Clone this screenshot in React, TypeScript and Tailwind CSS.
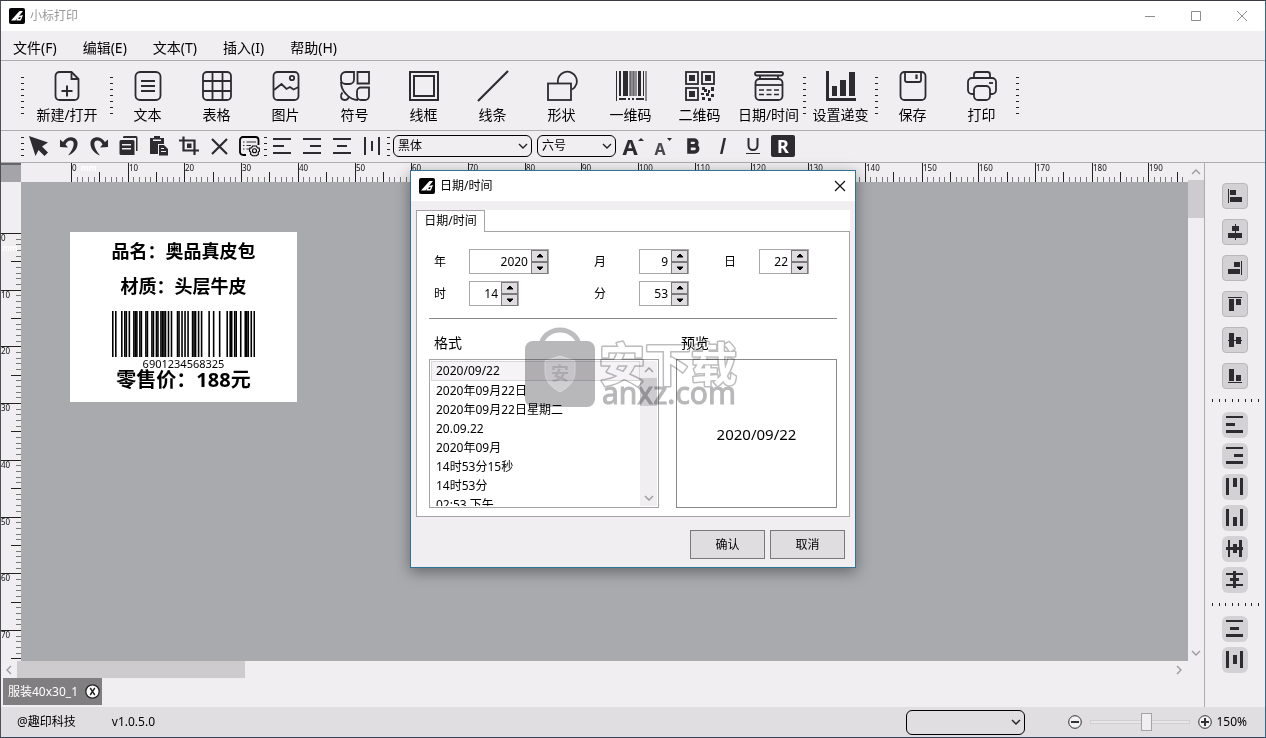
import type { ReactNode } from "react";

const INK = "#2d2b30";

const MENUS = ["文件(F)", "编辑(E)", "文本(T)", "插入(I)", "帮助(H)"];

const FORMATS = [
  "2020/09/22",
  "2020年09月22日",
  "2020年09月22日星期二",
  "20.09.22",
  "2020年09月",
  "14时53分15秒",
  "14时53分",
  "02:53 下午",
];

/* ── Icons ── */

function Big({ children }: { children: ReactNode }) {
  return (
    <svg width="32" height="32" viewBox="0 0 32 32" fill="none" stroke={INK} strokeWidth="1.8" aria-hidden>
      {children}
    </svg>
  );
}

const TOOL_ICONS: Record<string, ReactNode> = {
  new: (
    <Big>
      <path d="M20.5 2H8.5a4 4 0 0 0-4 4v20a4 4 0 0 0 4 4h15a4 4 0 0 0 4-4V9z" strokeLinejoin="round" />
      <path d="M20.5 2v7h7" />
      <path d="M16 15.500v11M10.500 21h11" strokeWidth="2" />
    </Big>
  ),
  text: (
    <Big>
      <rect x="3.5" y="2" width="25" height="28" rx="4.5" />
      <path d="M9 11h14M9 16h14M9 21h14" strokeWidth="2" />
    </Big>
  ),
  table: (
    <Big>
      <rect x="2" y="2" width="28" height="28" rx="4" />
      <path d="M11.5 2v28M21.5 2v28M2 11h28M2 21h28" />
    </Big>
  ),
  image: (
    <Big>
      <rect x="3.5" y="2" width="25" height="28" rx="4" />
      <circle cx="22" cy="8" r="2.2" />
      <path d="M4 20l7.500-6 5 5 3.500-2 3.500 2.500 5-2.500" />
    </Big>
  ),
  symbol: (
    <Big>
      <path d="M6.500 2H15v7.500a4.500 4.500 0 0 1-4.500 4.500h-4A4.500 4.500 0 0 1 2 9.500v-3A4.500 4.500 0 0 1 6.500 2z" />
      <path d="M18.500 2H30v11.500H18.500z" />
      <path d="M2 12c0 6 2 9 5 12 3 3.500 7 6 12 6" />
      <path d="M3.500 22.500C1 25 1.500 30 5.500 30c2.500 0 4-1.500 4.500-3.500" />
      <path d="M22 17.500h8V26a4 4 0 0 1-4 4h-4a4 4 0 0 1-4-4v-4.500a4 4 0 0 1 4-4z" />
    </Big>
  ),
  frame: (
    <Big>
      <rect x="2" y="2" width="28" height="28" strokeWidth="2" />
      <rect x="6" y="6" width="20" height="20" strokeWidth="2" />
    </Big>
  ),
  line: (
    <Big>
      <path d="M1 31L31 1" strokeWidth="2.200" />
    </Big>
  ),
  shape: (
    <Big>
      <path d="M12 13a9.500 9.500 0 1 1 14 6.500" />
      <rect x="2" y="13.500" width="23" height="16.500" />
    </Big>
  ),
  barcode: (
    <Big>
      <g fill={INK} stroke="none">
        <path d="M1 1h1v30H1zM4 1h2v25H4zM8 1h5v25H8zM23 1h3v25h-3zM28 1h1v25h-1zM4 28h7v2H4zM13 28h2v2h-2zM17 28h2v2h-2zM21 28h8v2h-8z" />
        <path d="M14 1h8v25h-8zM30 1h2v30h-2z" fill="#8d8b90" />
        <path d="M15 1h1v25h-1zM18 1h1v25h-1z" fill="#6a686d" />
      </g>
    </Big>
  ),
  qr: (
    <Big>
      <rect x="2" y="2" width="12" height="12" />
      <rect x="18" y="2" width="12" height="12" />
      <rect x="2" y="18" width="12" height="12" />
      <g fill={INK} stroke="none">
        <rect x="5" y="5" width="6" height="6" />
        <rect x="21" y="5" width="6" height="6" />
        <rect x="5" y="21" width="6" height="6" />
        <path d="M18 17h3v2h2v3h-3v-2h-2zM27 17h3v4h-3zM24 20h2v3h-2zM22 23h3v3h-3zM17 23h3v2h-3zM27 24h3v3h-3zM18 27h3v3h-3zM24 28h3v3h-3z" />
      </g>
    </Big>
  ),
  calendar: (
    <Big>
      <rect x="2" y="2" width="28" height="3.500" rx="1.700" />
      <path d="M7 6v3M25 6v3" />
      <rect x="2.500" y="9" width="27" height="21" rx="4" />
      <path d="M2.500 15h27" />
      <path d="M6 20h5M13.500 20h5M21 20h5M6 24.500h5M13.500 24.500h5M21 24.500h5" strokeWidth="1.600" />
    </Big>
  ),
  bars: (
    <Big>
      <g fill={INK} stroke="none">
        <path d="M1 1h3v27h27v3H1z" />
        <path d="M7 16h5v10H7zM15 10h6v16h-6zM24 2h6v24h-6z" />
      </g>
    </Big>
  ),
  save: (
    <Big>
      <rect x="3.500" y="2" width="25" height="28" rx="4" />
      <path d="M8 2v8a2 2 0 0 0 2 2h12a2 2 0 0 0 2-2V2" />
      <path d="M19.500 4.500v4.500" strokeWidth="2.200" />
    </Big>
  ),
  print: (
    <Big>
      <path d="M8 8V4.500A2.500 2.500 0 0 1 10.500 2h11A2.500 2.500 0 0 1 24 4.500V8" />
      <path d="M8 24H6a4 4 0 0 1-4-4v-8a4 4 0 0 1 4-4h20a4 4 0 0 1 4 4v8a4 4 0 0 1-4 4h-2" />
      <rect x="8" y="16" width="16" height="14" rx="4" />
      <path d="M23 13h4" />
    </Big>
  ),
};

const TOOL_GROUPS = [
  [{ icon: "new", label: "新建/打开" }],
  [
    { icon: "text", label: "文本" },
    { icon: "table", label: "表格" },
    { icon: "image", label: "图片" },
    { icon: "symbol", label: "符号" },
    { icon: "frame", label: "线框" },
    { icon: "line", label: "线条" },
    { icon: "shape", label: "形状" },
    { icon: "barcode", label: "一维码" },
    { icon: "qr", label: "二维码" },
    { icon: "calendar", label: "日期/时间" },
  ],
  [{ icon: "bars", label: "设置递变" }],
  [
    { icon: "save", label: "保存" },
    { icon: "print", label: "打印" },
  ],
];

function Small({ children }: { children: ReactNode }) {
  return (
    <svg width="22" height="22" viewBox="0 0 22 22" fill={INK} stroke="none" aria-hidden>
      {children}
    </svg>
  );
}

const EDIT_ICONS = [
  {
    label: "选择",
    icon: (
      <Small>
        <path d="M1 1l19 6.500-6 4 6 6-3.500 3.500-6-6L7.500 21z" />
      </Small>
    ),
  },
  {
    label: "撤销",
    icon: (
      <Small>
        <path d="M2 4.500V12l8 .500-2.500-3C9 6 12 4.500 14.500 6c2.500 2 1 8-4.500 14.500C17 18 20 12.500 19.500 7.500 19 1.500 9.500-.500 5 7z" />
      </Small>
    ),
  },
  {
    label: "重做",
    icon: (
      <Small>
        <path d="M20 4.500V12l-8 .500 2.500-3C13 6 10 4.500 7.500 6 5 8 6.500 14 12 20.500 5 18 2 12.500 2.500 7.500 3 1.500 12.500-.500 17 7z" />
      </Small>
    ),
  },
  {
    label: "复制",
    icon: (
      <Small>
        <path d="M6 1h12a1.500 1.500 0 0 1 1.500 1.500V16H18V3H5V2.500A1.500 1.500 0 0 1 6 1z" />
        <path d="M3 5h12a1.500 1.500 0 0 1 1.500 1.500V20H3a1.500 1.500 0 0 1-1.500-1.500v-12A1.500 1.500 0 0 1 3 5z" />
        <path d="M4 9h9v1.500H4zM4 13h9v1.500H4z" fill="#f0eef1" />
      </Small>
    ),
  },
  {
    label: "粘贴",
    icon: (
      <Small>
        <path d="M2 3h4V1h6v2h4v6h-6v10H2z" />
        <path d="M5 4.500h8v1.500H5z" fill="#f0eef1" />
        <path d="M11 10h5l4 4v6.500h-9z" />
        <path d="M13 13h3v1h-3zM13 16h5v1h-5z" fill="#f0eef1" />
      </Small>
    ),
  },
  {
    label: "裁剪",
    icon: (
      <Small>
        <path
          d="M1 5.500h15.500V20M5.500 1.500v14H21"
          fill="none"
          stroke={INK}
          strokeWidth="2.200"
        />
        <path d="M9 8.500h4.500V13H9z" />
      </Small>
    ),
  },
  {
    label: "删除",
    icon: (
      <Small>
        <path d="M4 4l15 15M19 4L4 19" stroke={INK} strokeWidth="2.200" />
      </Small>
    ),
  },
  {
    label: "属性",
    icon: (
      <Small>
        <path
          d="M8 20H5a3 3 0 0 1-3-3V5a3 3 0 0 1 3-3h12.500a3 3 0 0 1 3 3v5"
          fill="none"
          stroke="#000"
          strokeWidth="1.800"
        />
        <path d="M5 7h1.500M8.500 7H18M5 10.500h1.500M8.500 10.500H13M5 14h1.500M8.500 14H11" stroke="#333" />
        <path
          d="M14.500 11h4l.800 1.800 1.900.300.300 2.900-1.300 1.300.200 2-2 1.400h-3.800l-2-1.400.200-2-1.300-1.300.300-2.900 1.900-.300z"
          fill="#f0eef1"
          stroke="#000"
          strokeWidth="1.100"
        />
        <circle cx="16.500" cy="15.800" r="2" fill="none" stroke="#000" strokeWidth="1.100" />
      </Small>
    ),
  },
];

const ALIGN_ICONS = [
  { label: "左对齐", d: "M2 2h18v2H2zM2 9h11v2H2zM2 16h18v2H2z" },
  { label: "右对齐", d: "M2 2h18v2H2zM9 9h11v2H9zM2 16h18v2H2z" },
  { label: "居中", d: "M2 2h18v2H2zM6 9h10v2H6zM2 16h18v2H2z" },
  { label: "两端对齐", d: "M3 1h2v18H3zM10 5h2v10h-2zM17 1h2v18h-2z" },
];

const ARRANGE = [
  { label: "左侧对齐", d: "M3 3h1v14H3zM5 4h6v5H5zM5 11h12v5H5z" },
  { label: "水平居中", d: "M10 2h1v16h-1zM7 4h7v5H7zM3 11h14v5H3z" },
  { label: "右侧对齐", d: "M16 3h1v14h-1zM9 4h6v5H9zM3 11h12v5H3z" },
  { label: "顶部对齐", d: "M3 3h14v1H3zM4 5h5v12H4zM11 5h5v6h-5z" },
  { label: "垂直居中", d: "M3 10h14v1H3zM4 3h5v14H4zM11 7h5v7h-5z" },
  { label: "底部对齐", d: "M3 16h14v1H3zM4 3h5v12H4zM11 9h5v6h-5z" },
];

const SPACING = [
  { label: "靠左分布", d: "M1 1h17v2H1zM1 8h9v3H1zM1 15h17v3H1z" },
  { label: "靠右分布", d: "M1 1h17v2H1zM9 8h9v3H9zM1 15h17v3H1z" },
  { label: "靠上分布", d: "M1 1h3v17H1zM8 1h4v9H8zM15 1h3v17h-3z" },
  { label: "靠下分布", d: "M1 1h3v17H1zM8 9h4v9H8zM15 1h3v17h-3z" },
  { label: "横向串联", d: "M3 1h2v17H3zM14 1h3v17h-3zM1 8h17v3H1zM8 5h4v9H8z" },
  { label: "纵向串联", d: "M1 3h17v2H1zM1 14h17v2H1zM8 1h3v17H8zM5 8h9v3H5z" },
];

const EQUAL = [
  { label: "纵向等距", d: "M1 1h17v2H1zM5 8h9v3H5zM1 15h17v3H1z" },
  { label: "横向等距", d: "M1 1h3v17H1zM8 5h4v9H8zM15 1h3v17h-3z" },
];

function Logo() {
  return (
    <svg width="16" height="16" viewBox="0 0 16 16" aria-hidden>
      <rect width="16" height="16" rx="2" fill="#050505" />
      <path d="M10.500 3H14L6.500 12.500H2z" fill="#fff" />
      <path d="M8.800 8.200L14 7l-2.200 5.500H7.300z" fill="#fff" />
      <path d="M9.800 9.500l2-.400-.800 1.900H9.200z" fill="#050505" />
    </svg>
  );
}

function Chevron({ d, color = "#9c9a9d" }: { d: string; color?: string }) {
  return (
    <svg width="10" height="10" viewBox="0 0 10 10" fill="none" stroke={color} strokeWidth="1.400" aria-hidden>
      <path d={d} />
    </svg>
  );
}

const UP = "M1 7l4-4 4 4";
const DOWN = "M1 3l4 4 4-4";
const LEFT = "M7 1L3 5l4 4";
const RIGHT = "M3 1l4 4-4 4";

/* ── Toolbars ── */

function Grip({ tall = false }: { tall?: boolean }) {
  const n = tall ? 7 : 4;
  return (
    <svg width="3" height={n * 6 - 5} className="shrink-0" aria-hidden>
      {Array.from({ length: n }, (_, i) => (
        <rect key={i} y={i * 6} width="3" height="1" fill="#222" />
      ))}
    </svg>
  );
}

function ToolButton({ icon, label }: { icon: string; label: string }) {
  return (
    <button
      className={`flex shrink-0 flex-col items-center pt-1 text-sm leading-5 whitespace-nowrap ${
        icon === "new" ? "w-[86px]" : "w-[69px]"
      }`}
    >
      {TOOL_ICONS[icon]}
      <span className="mt-[3px]">{label}</span>
    </button>
  );
}

function MainToolbar() {
  return (
    <div className="flex h-[70px] items-center border-b border-[#aeacaf] pl-5">
      <Grip tall />
      {TOOL_GROUPS.map((group) => (
        <div key={group[0].icon} className="flex items-center">
          {group.map((t) => (
            <ToolButton key={t.icon} {...t} />
          ))}
          <Grip tall />
        </div>
      ))}
    </div>
  );
}

function Combo({ label, value, className }: { label: string; value: string; className: string }) {
  return (
    <div className={`relative flex shrink-0 ${className}`}>
      <select
        aria-label={label}
        className="w-full appearance-none rounded-md border border-black bg-transparent px-1 text-xs"
      >
        <option>{value}</option>
      </select>
      <span className="pointer-events-none absolute inset-y-0 right-1 flex items-center">
        <Chevron d={DOWN} color="#222" />
      </span>
    </div>
  );
}

const CELL = "flex h-[26px] w-[30px] shrink-0 items-center justify-center";

function FormatToolbar() {
  return (
    <div className="flex h-8 items-center border-b border-[#aeacaf] pb-px pl-5">
      <Grip />
      {EDIT_ICONS.map((e) => (
        <button key={e.label} aria-label={e.label} className={CELL}>
          {e.icon}
        </button>
      ))}
      <Grip />
      {ALIGN_ICONS.map((a) => (
        <button key={a.label} aria-label={a.label} className={CELL}>
          <svg width="22" height="20" viewBox="0 0 22 20" fill={INK} aria-hidden>
            <path d={a.d} />
          </svg>
        </button>
      ))}
      <Grip />
      <Combo label="字体" value="黑体" className="ml-[3px] h-[22px] w-[139px]" />
      <Combo label="字号" value="六号" className="mr-[2px] ml-[5px] h-[22px] w-[79px]" />
      <button className={`${CELL} text-[22px] font-bold text-[#2d2b30]`} aria-label="增大字号">
        A
        <svg width="6" height="18" viewBox="0 0 6 18" aria-hidden>
          <path d="M0 4l3-3 3 3z" fill={INK} />
        </svg>
      </button>
      <button className={`${CELL} items-end text-base leading-5 font-bold text-[#4a484d]`} aria-label="减小字号">
        A
        <svg width="6" height="22" viewBox="0 0 6 22" aria-hidden>
          <path d="M1 1h5L3.500 4z" fill={INK} />
        </svg>
      </button>
      <button className={CELL} aria-label="加粗">
        <svg width="14" height="16" viewBox="0 0 14 16" fill="none" stroke={INK} strokeWidth="3.600" aria-hidden>
          <path d="M3 2h5a2.700 2.700 0 0 1 0 5.700H3zM3 7.700h5.500a3 3 0 0 1 0 6.300H3z" />
        </svg>
      </button>
      <button className={CELL} aria-label="斜体">
        <svg width="8" height="16" viewBox="0 0 8 16" aria-hidden>
          <path d="M4.500 0H7L3.500 16H1z" fill={INK} />
        </svg>
      </button>
      <button className={CELL} aria-label="下划线">
        <svg width="16" height="18" viewBox="0 0 16 18" fill="none" stroke={INK} aria-hidden>
          <path d="M3.500 1v7.500a4.500 4.500 0 0 0 9 0V1" strokeWidth="2" />
          <path d="M1 16.500h14" />
        </svg>
      </button>
      <button className={CELL} aria-label="反白">
        <span className="flex h-[22px] w-6 items-center justify-center rounded-xs bg-[#2d2b30] text-lg leading-none font-bold text-white">
          R
        </span>
      </button>
    </div>
  );
}

/* ── Rulers ── */

const PX_PER_MM = 5.67;

function HorizontalRuler() {
  return (
    <svg className="block h-[19px] min-w-0 flex-1 bg-[#f0eef1]" aria-hidden>
      {Array.from({ length: 198 }, (_, mm) => {
        const x = 50 + Math.round(mm * PX_PER_MM);
        const major = mm % 10 === 0;
        const y = major ? 0 : mm % 5 === 0 ? 9 : 14;
        return (
          <g key={mm}>
            <rect x={x} y={y} width="1" height={19 - y} fill={mm % 5 === 0 ? "#222" : "#777"} />
            {major && (
              <text x={x + 1} y="8" className="text-[8px]" fill="#111">
                {mm}
              </text>
            )}
          </g>
        );
      })}
      <text x="60" y="8" className="text-[8px] font-bold" fill="#fff">
        mm
      </text>
    </svg>
  );
}

function VerticalRuler() {
  return (
    <svg className="block w-5 shrink-0 bg-[#f0eef1]" aria-hidden>
      {Array.from({ length: 76 }, (_, mm) => {
        const y = 51 + Math.round(mm * PX_PER_MM);
        const major = mm % 10 === 0;
        const x = major ? 0 : mm % 5 === 0 ? 10 : 15;
        return (
          <g key={mm}>
            <rect x={x} y={y} width={20 - x} height="1" fill={mm % 5 === 0 ? "#222" : "#777"} />
            {major && (
              <text x="0" y={y + 8} className="text-[8px]" fill="#111">
                {mm}
              </text>
            )}
          </g>
        );
      })}
      <text x="1" y="69" className="text-[8px] font-bold" fill="#fff">
        mm
      </text>
    </svg>
  );
}

/* ── Label on the canvas ── */

const L_CODES = ["0001101", "0011001", "0010011", "0111101", "0100011", "0110001", "0101111", "0111011", "0110111", "0001011"];
const PARITY = ["LLLLLL", "LLGLGG", "LLGGLG", "LLGGGL", "LGLLGG", "LGGLLG", "LGGGLL", "LGLGLG", "LGLGGL", "LGGLGL"];

// EAN-13: R codes are inverted L codes, G codes are R codes read backwards
function ean13(code: string) {
  const invert = (s: string) => s.replace(/[01]/g, (b) => (b === "0" ? "1" : "0"));
  const digits = [...code].map(Number);
  const parity = PARITY[digits[0]];
  const left = digits.slice(1, 7).map((d, i) =>
    parity[i] === "L" ? L_CODES[d] : [...invert(L_CODES[d])].reverse().join("")
  );
  const right = digits.slice(7).map((d) => invert(L_CODES[d]));
  return `101${left.join("")}01010${right.join("")}101`;
}

function Barcode({ code }: { code: string }) {
  return (
    <svg
      className="mt-[13px] block h-[46px] w-[143px]"
      viewBox="0 0 95 10"
      preserveAspectRatio="none"
      role="img"
      aria-label={code}
    >
      {[...ean13(code)].map((bit, i) => bit === "1" && <rect key={i} x={i} width="1.050" height="10" />)}
    </svg>
  );
}

function LabelSheet() {
  return (
    <div className="absolute top-[50px] left-[49px] flex h-[170px] w-[227px] flex-col items-center bg-white pt-[7px] text-lg leading-6 font-bold text-black">
      <p>品名：奥品真皮包</p>
      <p className="mt-[11px]">材质：头层牛皮</p>
      <Barcode code="6901234568325" />
      <p className="pt-px text-[11px] leading-3 font-normal">6901234568325</p>
      <p className="text-xl leading-5">零售价：188元</p>
    </div>
  );
}

/* ── Workspace ── */

function Workspace() {
  return (
    <div className="flex min-w-0 flex-1 flex-col">
      <div className="flex flex-1">
        <div className="flex min-w-0 flex-1 flex-col">
          <div className="flex">
            <div className="h-[19px] w-5 shrink-0 border-t-2 border-[#66656a] bg-[#a5a5a9]" />
            <HorizontalRuler />
          </div>
          <div className="flex flex-1">
            <VerticalRuler />
            <div className="relative flex-1 bg-[#a9aaae]">
              <LabelSheet />
            </div>
          </div>
        </div>
        <div className="flex w-4 flex-col items-center">
          <div className="flex h-[17px] items-center">
            <Chevron d={UP} />
          </div>
          <div className="h-[38px] w-full bg-[#cdcbce]" />
          <div className="mt-auto flex h-[17px] items-center">
            <Chevron d={DOWN} />
          </div>
        </div>
      </div>
      <div className="flex h-[17px] items-center pr-5">
        <div className="flex w-4 justify-center">
          <Chevron d={LEFT} />
        </div>
        <div className="h-full w-[228px] bg-[#cdcbce]" />
        <div className="ml-auto">
          <Chevron d={RIGHT} />
        </div>
      </div>
      <div className="h-[29px] pl-[2px]">
        <div className="flex h-[27px] w-[99px] items-center justify-between bg-[#807e81] pr-[2px] pl-[5px] text-xs text-white">
          服装40x30_1
          <button aria-label="关闭标签" className="flex">
            <svg width="15" height="15" viewBox="0 0 15 15" aria-hidden>
              <circle cx="7.500" cy="7.500" r="6.700" fill="#fff" stroke="#222" strokeWidth="1.300" />
              <path d="M5.200 4l4.600 7M9.800 4l-4.600 7" stroke="#222" strokeWidth="1.400" />
            </svg>
          </button>
        </div>
      </div>
    </div>
  );
}

function SideDots() {
  return (
    <svg width="48" height="3" viewBox="0 0 48 3" aria-hidden>
      {Array.from({ length: 8 }, (_, i) => (
        <rect key={i} x={1 + Math.round(i * 6.5)} width="1" height="3" fill="#222" />
      ))}
    </svg>
  );
}

function SideButton({ label, d, bordered = false }: { label: string; d: string; bordered?: boolean }) {
  return (
    <button
      aria-label={label}
      className={`flex h-[26px] w-[26px] items-center justify-center bg-[#d3d1d4] ${
        bordered ? "rounded-sm border border-[#b9b7ba]" : "rounded-md"
      }`}
    >
      <svg width="20" height="20" viewBox="0 0 20 20" fill={INK} aria-hidden>
        <path d={d} />
      </svg>
    </button>
  );
}

function SidePanel() {
  return (
    <aside className="flex w-[61px] shrink-0 flex-col items-center border-l border-[#aeacaf] pt-5">
      <div className="flex flex-col gap-[10px]">
        {ARRANGE.map((b) => (
          <SideButton key={b.label} {...b} bordered />
        ))}
      </div>
      <div className="flex h-[23px] items-center">
        <SideDots />
      </div>
      <div className="flex flex-col gap-[5px]">
        {SPACING.map((b) => (
          <SideButton key={b.label} {...b} />
        ))}
      </div>
      <div className="flex h-[23px] items-center">
        <SideDots />
      </div>
      <div className="flex flex-col gap-[5px]">
        {EQUAL.map((b) => (
          <SideButton key={b.label} {...b} />
        ))}
      </div>
    </aside>
  );
}

function ZoomButton({ label, d }: { label: string; d: string }) {
  return (
    <button aria-label={label} className="flex">
      <svg width="14" height="14" viewBox="0 0 14 14" fill="none" stroke="#333" aria-hidden>
        <circle cx="7" cy="7" r="6.300" fill="#f2f1f3" />
        <path d={d} strokeWidth="2" />
      </svg>
    </button>
  );
}

function StatusBar() {
  return (
    <footer className="flex h-[30px] shrink-0 items-center bg-[#e0dee1] pr-[18px] pl-4 text-xs">
      <span>@趣印科技</span>
      <span className="ml-9">v1.0.5.0</span>
      <Combo label="设备" value="" className="ml-auto h-[25px] w-[119px]" />
      <div className="ml-[43px] flex items-center">
        <ZoomButton label="缩小" d="M3 7h8" />
        <input
          type="range"
          aria-label="缩放"
          min={0}
          max={100}
          defaultValue={57}
          className="mx-2 h-[18px] w-[100px] appearance-none bg-transparent [&::-webkit-slider-runnable-track]:h-1 [&::-webkit-slider-runnable-track]:border [&::-webkit-slider-runnable-track]:border-[#d0ced1] [&::-webkit-slider-runnable-track]:bg-[#e8e6e9] [&::-webkit-slider-thumb]:-mt-2 [&::-webkit-slider-thumb]:h-[18px] [&::-webkit-slider-thumb]:w-[11px] [&::-webkit-slider-thumb]:appearance-none [&::-webkit-slider-thumb]:border [&::-webkit-slider-thumb]:border-[#a5a3a6] [&::-webkit-slider-thumb]:bg-[#f0eef1]"
        />
        <ZoomButton label="放大" d="M3 7h8M7 3v8" />
        <span className="ml-1">150%</span>
      </div>
    </footer>
  );
}

/* ── Date/time dialog ── */

function SpinField({ id, label, value, wide = false }: { id: string; label: string; value: number; wide?: boolean }) {
  return (
    <>
      <label htmlFor={id}>{label}</label>
      <div className={`flex h-[25px] border border-[#a9a7aa] bg-white ${wide ? "w-20" : "w-[50px]"}`}>
        <input
          id={id}
          type="number"
          defaultValue={value}
          className="min-w-0 flex-1 [appearance:textfield] pr-[3px] text-right outline-none [&::-webkit-inner-spin-button]:appearance-none"
        />
        <div className="flex w-[17px] flex-col">
          {["M4 6l3-3 3 3z", "M4 4l3 3 3-3z"].map((d, i) => (
            <button
              key={d}
              aria-label={`${label}${i === 0 ? "加" : "减"}`}
              className="flex flex-1 items-center justify-center border border-[#7b797c] bg-[#dedcdf]"
            >
              <svg width="14" height="10" viewBox="0 0 14 10" aria-hidden>
                <path d={d} stroke="#000" />
              </svg>
            </button>
          ))}
        </div>
      </div>
    </>
  );
}

function Watermark() {
  return (
    <svg
      className="pointer-events-none absolute top-[153px] left-[112px] mix-blend-multiply"
      width="220"
      height="90"
      viewBox="0 0 220 90"
      aria-hidden
    >
      <path d="M18 23a19 17 0 0 1 38 0" fill="none" stroke="#bdbcbe" strokeWidth="5" />
      <rect x="2" y="17" width="70" height="66" rx="8" fill="#b8b7b9" />
      <path d="M37 32l15 5v11c0 9-6 15-15 20-9-5-15-11-15-20V37z" fill="#cfced0" stroke="#dcdbdd" />
      <text x="37" y="56" textAnchor="middle" className="text-lg font-bold" fill="#b3b2b4">
        安
      </text>
      <text
        x="76"
        y="57"
        className="text-[46px] font-bold"
        fill="#fff"
        stroke="#bcbbbd"
        strokeWidth="3"
        paintOrder="stroke"
        strokeLinejoin="round"
      >
        安下载
      </text>
      <text x="79" y="80" className="text-[30px] font-normal" fill="#b8b7b9" stroke="#b8b7b9">
        anxz.com
      </text>
    </svg>
  );
}

function DateTimeDialog() {
  return (
    <div className="absolute inset-0 flex items-center justify-center">
      <div
        role="dialog"
        aria-label="日期/时间"
        className="relative w-[446px] border border-[#2f7398] bg-[#f0eef1] text-xs shadow-[0_4px_14px_rgba(0,0,0,0.4)]"
      >
        <div className="flex h-[30px] items-center bg-white pr-[9px] pb-px pl-2">
          <Logo />
          <span className="ml-[5px]">日期/时间</span>
          <button aria-label="关闭" className="ml-auto">
            <svg width="12" height="12" viewBox="0 0 12 12" stroke="#111" strokeWidth="1.200" aria-hidden>
              <path d="M1 1l10 10M11 1L1 11" />
            </svg>
          </button>
        </div>

        <div className="px-[5px] pt-[9px] pb-2">
          <div role="tablist" className="flex bg-white">
            <button
              role="tab"
              aria-selected
              className="relative -mb-px flex h-[22px] w-[69px] items-center justify-center border border-b-0 border-[#a5a3a6] bg-white pb-px"
            >
              日期/时间
            </button>
          </div>
          <div className="border border-[#a5a3a6] bg-white px-3 pt-[17px] pb-2">
            <div className="grid grid-cols-[35px_125px_45px_85px_35px_auto] items-center gap-y-[7px] pl-[5px]">
              <SpinField id="year" label="年" value={2020} wide />
              <SpinField id="month" label="月" value={9} />
              <SpinField id="day" label="日" value={22} />
              <SpinField id="hour" label="时" value={14} />
              <SpinField id="minute" label="分" value={53} />
            </div>
            <hr className="mt-3 border-[#8a888b]" />
            <div className="mt-3 flex gap-[17px]">
              <div className="w-[230px]">
                <p id="format-label" className="pl-[5px] text-sm leading-6">
                  格式
                </p>
                <div className="mt-1 flex h-[149px] border border-[#a5a3a6] p-px">
                  <ul role="listbox" aria-labelledby="format-label" className="min-w-0 flex-1 overflow-hidden">
                    {FORMATS.map((f, i) => (
                      <li
                        key={f}
                        role="option"
                        aria-selected={i === 0}
                        className={`flex items-center border pl-1 whitespace-nowrap ${
                          i === 0 ? "h-5 border-[#d9d7da] bg-[#f5f3f6]" : "h-[19px] border-transparent"
                        }`}
                      >
                        {f}
                      </li>
                    ))}
                  </ul>
                  <div className="flex w-[17px] flex-col items-center bg-[#f0eef1]">
                    <div className="flex h-[17px] items-center">
                      <Chevron d={UP} />
                    </div>
                    <div className="h-7 w-full bg-[#cdcbce]" />
                    <div className="mt-auto flex h-[17px] items-center">
                      <Chevron d={DOWN} />
                    </div>
                  </div>
                </div>
              </div>
              <div className="flex-1">
                <p className="pl-[5px] text-sm leading-6">预览</p>
                <div className="mt-1 flex h-[149px] items-center justify-center border border-[#8a888b] text-[15px]">
                  2020/09/22
                </div>
              </div>
            </div>
          </div>
          <div className="mt-[13px] flex justify-end gap-[5px] pr-[5px]">
            <button className="h-[29px] w-[75px] border border-[#7b797c] bg-[#dfdde0]">确认</button>
            <button className="h-[29px] w-[75px] border border-[#7b797c] bg-[#dfdde0]">取消</button>
          </div>
        </div>
        <Watermark />
      </div>
    </div>
  );
}

export default function App() {
  return (
    <div
      lang="zh-CN"
      className="relative flex min-h-screen flex-col border border-t-[#3a3c44] border-r-[#2f6c90] border-b-[#33465e] border-l-[#4b4f5a] bg-[#f0eef1] font-['Noto_Sans','Noto_Sans_CJK_SC',sans-serif] text-black"
    >
      <header className="flex h-[30px] items-center bg-white pr-[17px] pb-px pl-2 text-xs text-[#999]">
        <Logo />
        <span className="ml-[5px]">小标打印</span>
        <div className="ml-auto flex gap-[34px]">
          {[
            { label: "最小化", d: "M1 6.500h10" },
            { label: "最大化", d: "M1.500 1.500h9v9h-9z" },
            { label: "关闭窗口", d: "M1 1l10 10M11 1L1 11" },
          ].map(({ label, d }) => (
            <button key={label} aria-label={label}>
              <svg width="12" height="12" viewBox="0 0 12 12" fill="none" stroke="#8e8e8e" aria-hidden>
                <path d={d} />
              </svg>
            </button>
          ))}
        </div>
      </header>

      <nav className="flex h-[30px] items-center gap-[26px] border-b border-[#aeacaf] pt-1 pl-3 text-sm">
        {MENUS.map((m) => (
          <button key={m}>{m}</button>
        ))}
      </nav>

      <MainToolbar />
      <FormatToolbar />

      <main className="flex flex-1">
        <Workspace />
        <SidePanel />
      </main>

      <StatusBar />
      <DateTimeDialog />
    </div>
  );
}
